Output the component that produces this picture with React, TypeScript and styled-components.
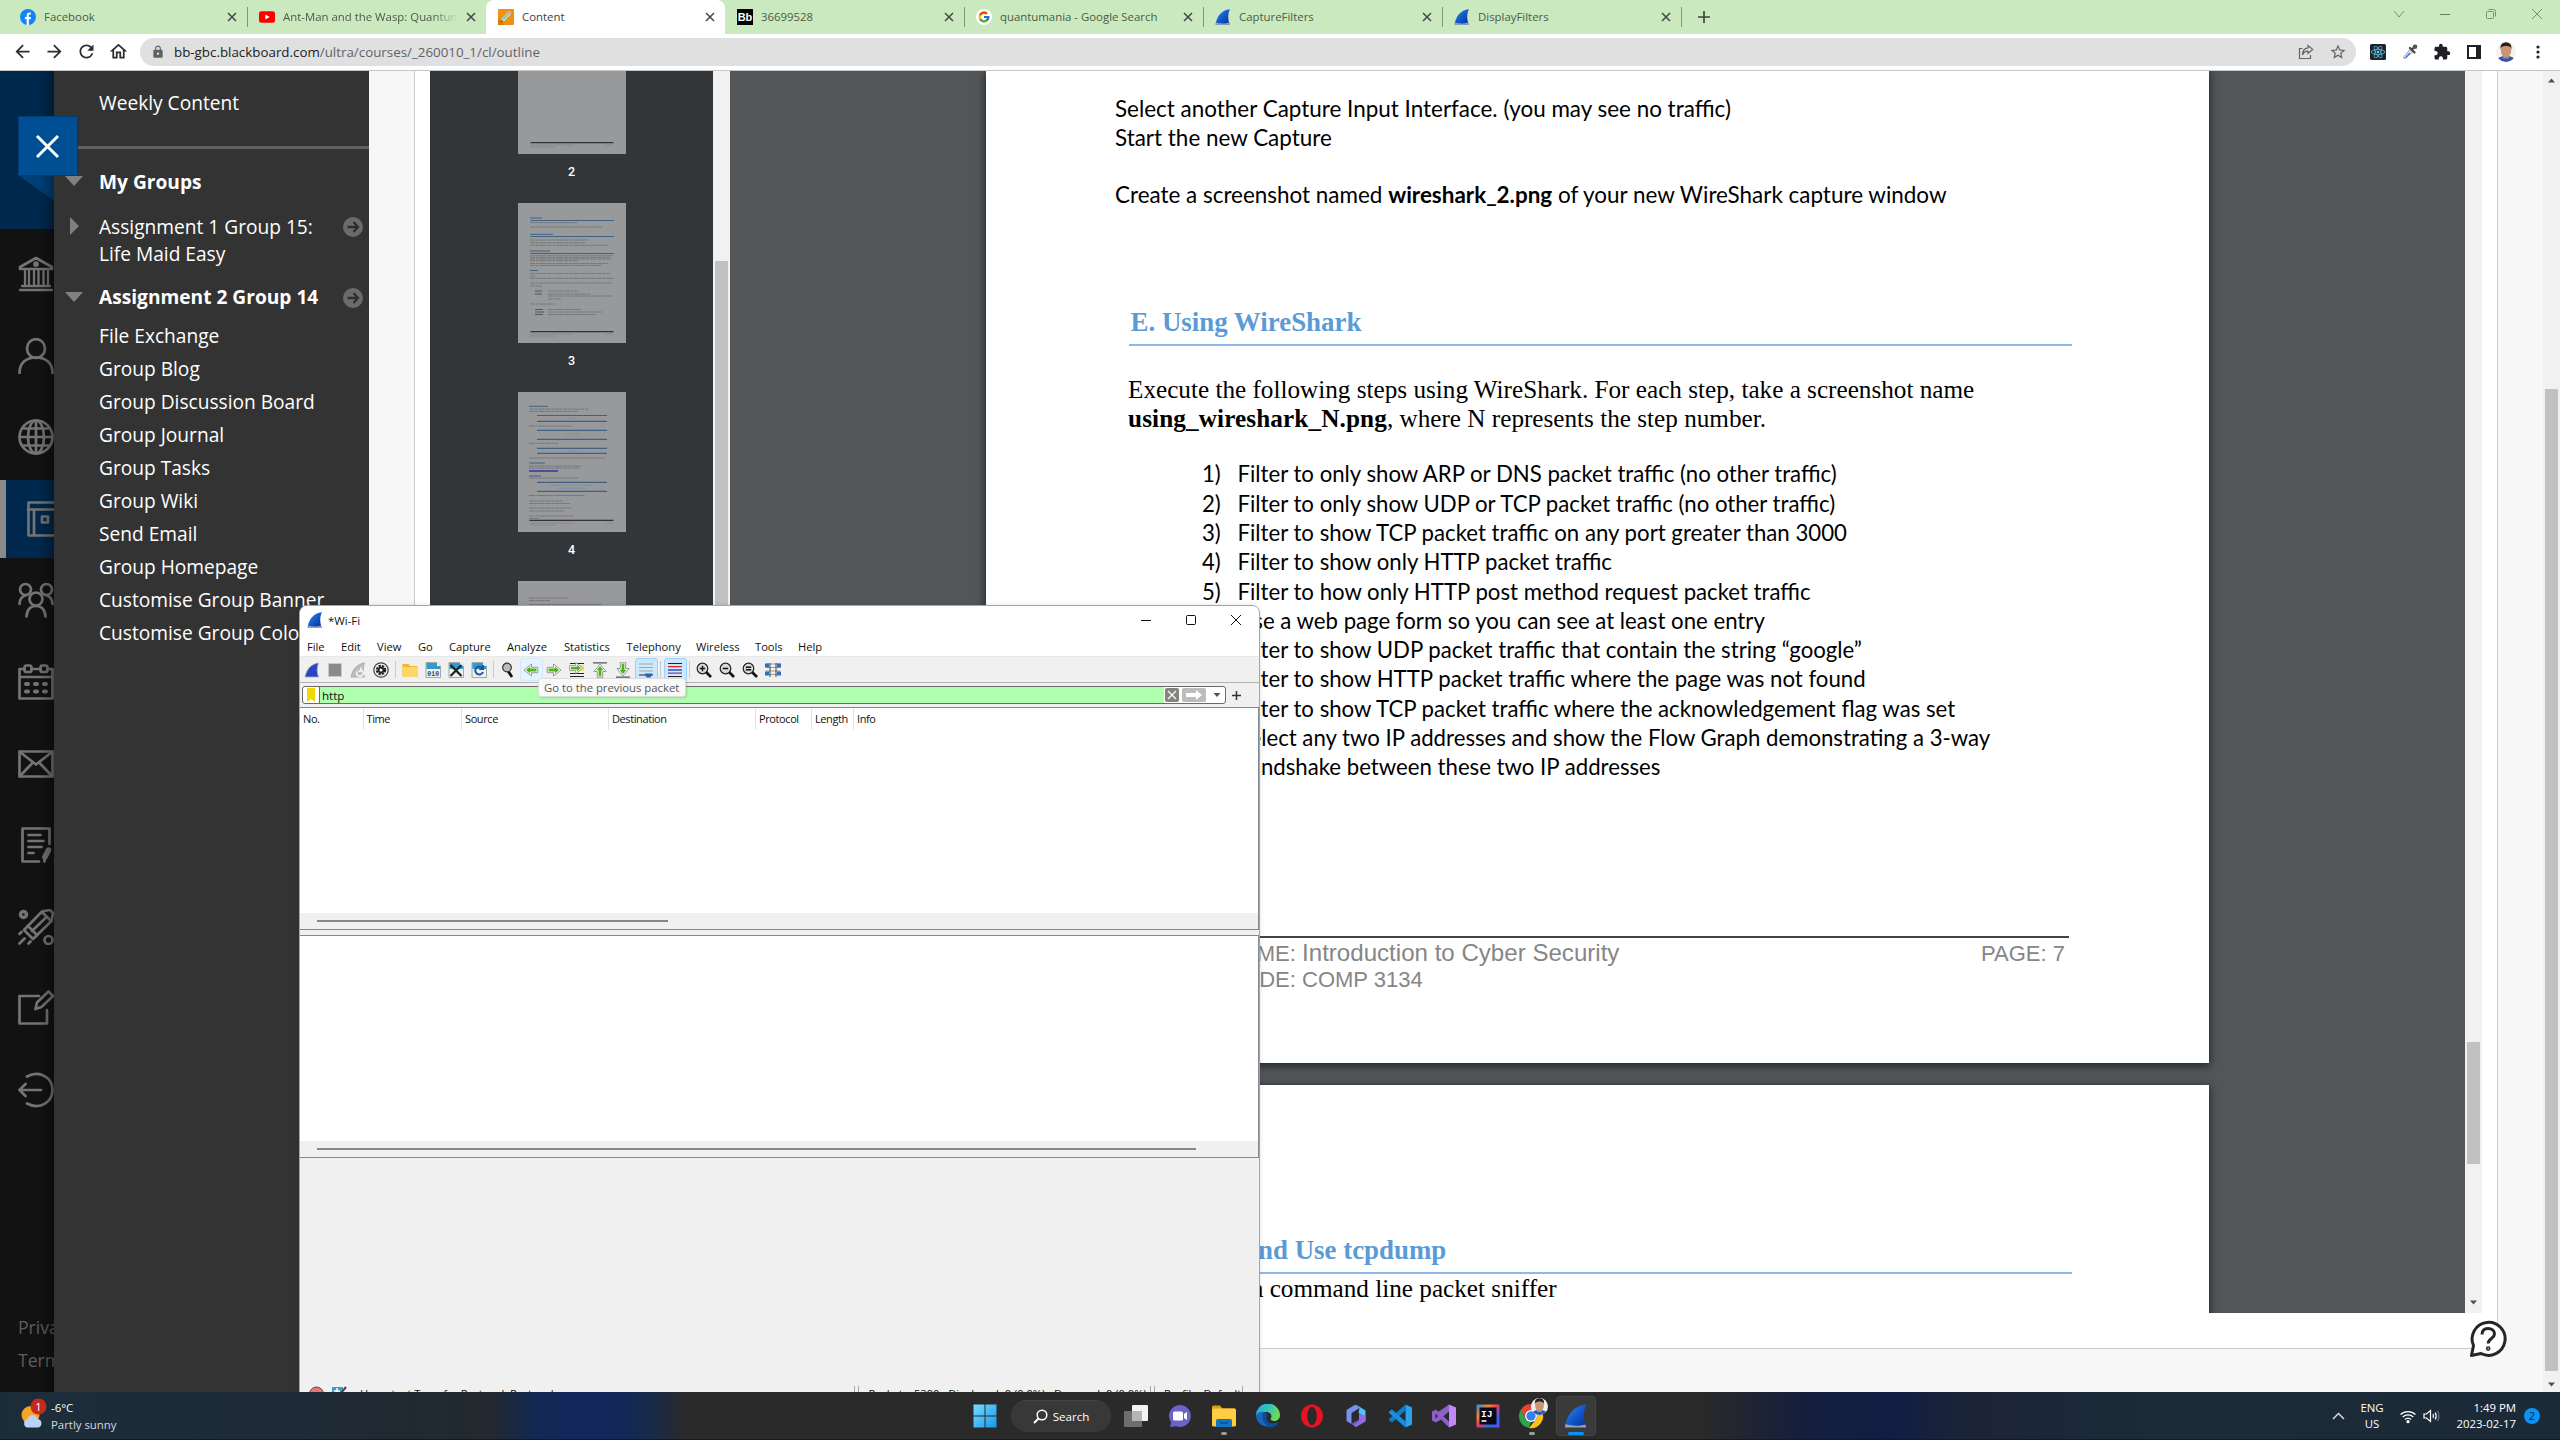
import React from 'react';
import styled, { createGlobalStyle, css } from 'styled-components';
import { MdArrowBack, MdArrowForward, MdRefresh, MdOutlineHome, MdLock, MdStarBorder, MdExtension } from 'react-icons/md';
import { FcGoogle } from 'react-icons/fc';
import { FaReact } from 'react-icons/fa';

const UI = '"Open Sans", "Noto Sans", sans-serif';
const DOC_SANS = 'Lato, "Open Sans", sans-serif';
const DOC_SERIF = '"Liberation Serif", serif';
const ARIAL = '"Liberation Sans", Arial, sans-serif';

const GlobalStyle = createGlobalStyle`
  * { box-sizing: border-box; }
  body { margin: 0; overflow: hidden; font-family: ${UI}; }
  svg { display: block; flex: none; }
`;

const Desktop = styled.div`
  width: 2560px; height: 1440px; overflow: hidden; display: flex; flex-direction: column;
`;
const Workspace = styled.div`
  position: relative; height: 1392px; overflow: hidden; display: flex; flex-direction: column; background: #fff;
`;

/* ---------- Browser chrome ---------- */
const TabStrip = styled.div`
  height: 34px; background: #cbe9bf; display: flex; padding-left: 8px; flex: none;
`;
const Tab = styled.div<{ $active?: boolean; $line?: boolean }>`
  width: 239px; height: 34px; display: flex; align-items: center; padding: 0 0 0 12px; position: relative;
  font-size: 11.4px; color: ${p => (p.$active ? '#3c4043' : '#4c5a49')};
  ${p => p.$active && css`background: #fff; border-radius: 8px 8px 0 0; `}
  ${p => p.$line && css`&::after { content: ''; position: absolute; right: -1px; top: 7px; width: 1px; height: 20px; background: #82947c; }`}
`;
const TabTitle = styled.div<{ $fade?: boolean }>`
  margin-left: 8px; width: 175px; overflow: hidden; white-space: nowrap; line-height: 20px;
  ${p => p.$fade && css`mask-image: linear-gradient(90deg, #000 150px, transparent 175px);`}
`;
const TabClose = styled.div`
  margin-left: 1px; width: 24px; display: flex; justify-content: center;
`;
const WindowButtons = styled.div`
  margin-left: auto; display: flex; height: 28px; align-items: center; svg { margin: 0 15px; }
`;
const NewTab = styled.div`
  width: 46px; display: flex; align-items: center; justify-content: center;
`;
const Toolbar = styled.div`
  height: 37px; border-bottom: 1px solid #c6c6c6; display: flex; align-items: center; padding: 0 6px 1px 6px; flex: none;
  color: #2b2d30;
`;
const NavButton = styled.div`
  width: 32px; flex: none; display: flex; justify-content: center;
`;
const Omnibox = styled.div`
  margin-left: 6px; width: 2216px; flex: none; height: 28px; border-radius: 14px; background: #e0e0e0; display: flex; align-items: center;
  padding: 0 9px 0 11px; font-size: 13.35px; color: #5f6368; margin-right: 6px; gap: 9px;
`;
const OmniActions = styled.div`
  display: flex; align-items: center; gap: 15px;
`;
const Url = styled.div`
  flex: 1; white-space: nowrap; b { font-weight: 400; color: #202124; }
`;

/* ---------- Page content ---------- */
const Content = styled.div`
  display: flex; height: 1321px; background: #f7f7f7;
`;
const Rail = styled.div`
  width: 54px; overflow: hidden; background: #121212; display: flex; flex-direction: column; position: relative; flex: none;
  &::after { content: ''; position: absolute; inset: 0; background: linear-gradient(90deg, transparent 38px, rgba(0,0,0,.3)); }
`;
const RailHead = styled.div`
  height: 158px; flex: none; background: #00284d; margin-bottom: 6px; display: flex; padding: 104px 0 0 18px;
`;
const RailItem = styled.div<{ $active?: boolean }>`
  height: 78px; margin-bottom: 3.6px; flex: none; display: flex; align-items: center; padding-left: 18px; color: #747474;
  ${p => p.$active && css`background: #00284d; border-left: 6px solid #8a8a8a; padding-left: 18px;`}
`;
const RailLinks = styled.div`
  margin-top: auto; padding: 0 0 15px 18px; font-size: 17.6px; line-height: 33px; color: #5e5e5e; white-space: nowrap;
`;
const CloseButton = styled.div`
  position: absolute; left: 18px; top: 116px; width: 60px; height: 60px; background: #004f94; border: 1px solid #003e75;
  display: flex; align-items: center; justify-content: center; padding-right: 1px;
`;
const Menu = styled.div`
  width: 315px; background: #333; color: #fff; font-size: 19.15px; line-height: 33px; padding-top: 16px; white-space: nowrap; flex: none;
`;
const MenuLink = styled.div`
  padding-left: 45px;
`;
const MenuRule = styled.div`
  height: 3px; background: #5f5f5f; margin: 26px 0 17px;
`;
const MenuGroup = styled.div<{ $bold?: boolean; $gap?: number; $tight?: boolean }>`
  display: grid; grid-template-columns: 45px 1fr 26px; align-items: start; margin-bottom: ${p => p.$gap || 0}px;
  font-weight: ${p => (p.$bold ? 700 : 400)}; line-height: ${p => (p.$tight ? 27 : 33)}px;
`;
const Twisty = styled.svg<{ $top: number }>`
  margin: ${p => p.$top}px 0 0 11px;
`;
const Go = styled.svg<{ $top: number }>`
  margin-top: ${p => p.$top}px;
`;
const Card = styled.div`
  margin-left: 45px; width: 2084px; height: 1278px; background: #fff; border: 1px solid #ccc; border-top: 0; padding: 0 15px; flex: none;
`;
const Gutter = styled.div`
  flex: 1;
`;
const Viewer = styled.div`
  height: 1242px; display: flex; overflow: hidden; background: #525659;
`;
const Thumbs = styled.div`
  width: 283px; background: #323639; display: flex; flex-direction: column; align-items: center; color: #fff;
  font: 500 12.5px/14px Roboto, sans-serif; flex: none;
`;
const ThumbLabel = styled.div`
  height: 49px; padding-top: 11px; flex: none;
`;
const ThumbPage = styled.div<{ $cut?: boolean }>`
  width: 108px; height: ${p => (p.$cut ? 83 : 140)}px; background: #98999b; display: flex; flex: none; overflow: hidden;
  ${p => p.$cut && css`align-items: flex-end;`}
`;
const ScrollTrack = styled.div<{ $pad: number }>`
  width: 17px; background: #f1f1f1; padding: ${p => p.$pad}px 2px 0; position: relative; flex: none;
`;
const ScrollThumb = styled.div<{ $h: number }>`
  height: ${p => p.$h}px; background: #c1c1c1;
`;
const Caret = styled.svg<{ $top: number }>`
  position: absolute; left: 4px; top: ${p => p.$top}px;
`;
const Canvas = styled.div`
  width: 1735px; padding-left: 256px; flex: none; display: flex; flex-direction: column; gap: 22px;
`;
const Page = styled.div<{ $h: number; $top: number }>`
  width: 1223px; height: ${p => p.$h}px; padding: ${p => p.$top}px 137px 0 143px; background: #fff; flex: none; color: #000;
  box-shadow: 0 2px 8px 1px rgba(0,0,0,.55); white-space: nowrap; font-variant-ligatures: none;
`;
const Steps = styled.div`
  margin-left: -14px; font: 22.45px/28.8px ${DOC_SANS};
`;
const Heading = styled.div<{ $gap?: number }>`
  margin-top: ${p => p.$gap || 0}px;
  font: 700 26.9px/32px ${DOC_SERIF}; color: #5b9bd5; border-bottom: 2px solid #8fb9e2; padding: 0 0 6px 1.5px;
`;
const Para = styled.div<{ $gap?: number }>`
  margin: ${p => p.$gap || 0}px 0 0 -1px;
  font: 25.2px/28.5px ${DOC_SERIF}; b { letter-spacing: .12px; }
`;
const List = styled.div`
  margin-top: 26px; font: 22.2px/29.33px ${DOC_SANS};
`;
const Item = styled.div`
  display: grid; grid-template-columns: 35.5px 1fr; padding-left: 73px; column-gap: 0;
`;
const Footer = styled.div`
  margin: 154.5px 3px 0 -3px; border-top: 2px solid #444; display: flex; justify-content: space-between; color: #868686;
  font: 22px/26px ${ARIAL}; padding: 3px 4px 0 0; big { font-size: 24.1px; line-height: 20px; }
`;
const Help = styled.div`
  position: absolute; left: 2469px; top: 1320px;
`;

/* ---------- Wireshark window ---------- */
const Win = styled.div`
  position: absolute; left: 299px; top: 605px; width: 961px; height: 800px; border: 1px solid #a3a5a8; border-radius: 8px 8px 0 0;
  background: #f0f0f0; overflow: hidden; box-shadow: 0 0 5px rgba(0,0,0,.12); color: #111; font-size: 11.15px; display: flex; flex-direction: column;
`;
const TitleBar = styled.div`
  height: 32px; background: #fff; display: flex; align-items: center; padding: 0 17px 4px 7px; gap: 5px; flex: none; font-size: 11.4px;
`;
const Controls = styled.div`
  margin-left: auto; display: flex; gap: 33px;
`;
const MenuBar = styled.div`
  height: 19px; background: #fff; border-bottom: 1px solid #e8e8e8; display: grid; line-height: 17px; padding-left: 7px; flex: none;
  grid-template-columns: 34px 36px 41px 31px 58px 57px 62.5px 69.5px 59px 43px 40px;
`;
const Tools = styled.div`
  height: 26px; border-bottom: 1px solid #b4b4b4; display: flex; align-items: center; padding-left: .5px; flex: none;
`;
const Tool = styled.div<{ $on?: boolean; $hover?: boolean }>`
  width: 23px; height: 23px; display: flex; align-items: center; justify-content: center; border-radius: 3px; border: 1px solid transparent;
  ${p => p.$on && css`background: #cce8ff; border-color: #99d1ff;`}
  ${p => p.$hover && css`background: #e5f3ff; border-color: #cfe8fc;`}
`;
const ToolSep = styled.div`
  width: 6px; height: 17px; display: flex; justify-content: center; &::after { content: ''; width: 1px; background: #c9c9c9; }
`;
const FilterRow = styled.div`
  height: 24px; display: flex; align-items: center; padding: 0 18px 0 2px; flex: none; gap: 6px;
`;
const FilterBox = styled.div`
  width: 924px; height: 18px; border: 1px solid #6a6a6a; border-radius: 3px; background: #fff; display: flex; align-items: center;
`;
const Bookmark = styled.div`
  width: 17px; height: 16px; border-right: 1px solid #6a6a6a; display: flex; justify-content: center; align-items: center;
`;
const FilterInput = styled.div`
  width: 847px; height: 16px; background: #afffaf; padding-left: 2px; line-height: 17px; font-size: 11.6px; margin-right: 1px;
`;
const Pill = styled.div<{ $w: number; $c: string }>`
  width: ${p => p.$w}px; height: 14px; border-radius: 2px; background: ${p => p.$c}; display: flex; align-items: center; justify-content: center; margin-right: 3px;
`;
const Frame = styled.div`
  width: 960px; margin-left: -1px; height: 223px; border: 1px solid #828790; background: #fff; display: flex; flex-direction: column; margin-bottom: 5px; flex: none;
`;
const Columns = styled.div`
  display: grid; grid-template-columns: 63.5px 98.5px 147px 147px 56px 42px 1fr; height: 21px; line-height: 22px; letter-spacing: -.4px; font-size: 11px;
  span { border-right: 1px solid #e2e2e2; padding-left: 3px; } span:last-child { border: 0; }
`;
const HScroll = styled.div<{ $w: number }>`
  height: 16px; margin-top: auto; background: #f0f0f0; display: flex; align-items: center; padding-left: 17px;
  &::after { content: ''; width: ${p => p.$w}px; height: 2px; background: #868686; }
`;
const StatusBar = styled.div`
  margin-top: 222px; height: 24px; display: flex; align-items: flex-start; line-height: 16px; padding: 1px 0 0 9px; white-space: nowrap; flex: none;
`;
const Divider = styled.div<{ $single?: boolean }>`
  width: 5px; height: 18px; border: solid #a8a8a8; border-width: ${p => (p.$single ? '0 0 0 1px' : '0 1px')}; flex: none;
`;
const StatusCell = styled.div<{ $w: number; $pad: number }>`
  width: ${p => p.$w}px; padding-left: ${p => p.$pad}px; flex: none;
`;
const Tooltip = styled.div`
  position: absolute; left: 538px; top: 678px; width: 148px; height: 19px; background: #f9f9f9; border: 1px solid #dcdcdc; border-radius: 3px;
  color: #575757; font-size: 11.3px; line-height: 17px; padding-left: 5px; white-space: nowrap; box-shadow: 1px 1px 2px rgba(0,0,0,.15);
`;

/* ---------- Taskbar ---------- */
const TaskbarRow = styled.div`
  height: 48px; display: flex; align-items: center; color: #fff; font-size: 11.4px; flex: none; border-bottom: 1px solid #1b1524;
  background: linear-gradient(90deg, #1c2d3a 0, #1e2a36 300px, #22292f 490px, #14284f 530px, #13275a 560px, #13275a 620px, #172a4a 650px, #2a2a2a 685px,
    #2a2a2a 1700px, #151e3c 1800px, #111d44 1890px, #1b2436 1965px, #1c2b38 2150px, #1c2a37 2560px);
`;
const Weather = styled.div`
  width: 963px; padding-left: 20px; display: flex; gap: 6px; line-height: 17px; align-items: center; color: #d5d9dc; div b { display: block; font-weight: 400; color: #fff; }
`;
const TaskIcon = styled.div<{ $active?: boolean; $dot?: boolean }>`
  width: 44px; height: 48px; display: flex; align-items: center; justify-content: center; position: relative; z-index: 0;
  ${p => p.$active && css`&::before { content: ''; position: absolute; z-index: -1; inset: 4px 2px; background: #3a3a3a; border: 1px solid #444; border-radius: 4px; }`}
  ${p => (p.$active || p.$dot) && css`&::after { content: ''; position: absolute; bottom: 5px; height: 3px; border-radius: 2px;
    width: ${p.$active ? 16 : 6}px; background: ${p.$active ? '#0a93f5' : '#9a9a9a'}; }`}
`;
const SearchPill = styled.div`
  width: 100px; height: 32px; border-radius: 16px; margin: 0 3px 0 4px; background: #383838; border-top: 1px solid #444;
  display: flex; align-items: center; justify-content: center; gap: 5px; font-size: 11.6px;
`;
const Tray = styled.div`
  margin-left: auto; display: flex; align-items: center; line-height: 16px; padding-right: 20px; white-space: nowrap;
`;
const Stack = styled.div<{ $align: string; $w: number }>`
  width: ${p => p.$w}px; text-align: ${p => p.$align};
`;
const Badge = styled.div`
  width: 16px; height: 16px; border-radius: 50%; background: #0a93f5; color: #06233c; display: flex; align-items: center; justify-content: center; font-size: 11px; margin-left: 8px;
`;
const Spaced = styled.div`
  margin-left: 6px;
`;

/* ---------- Icons ---------- */
const Fin = ({ s = 16 }: { s?: number }) => (
  <svg width={s} height={s} viewBox="0 0 16 16">
    <defs><linearGradient id="fin" x1="0" y1="0" x2="1" y2="1"><stop offset="0" stopColor="#3a8bf0" /><stop offset=".55" stopColor="#0f55c8" /><stop offset="1" stopColor="#07308c" /></linearGradient></defs>
    <path d="M.5 15.6C2 7 6.500 1 15 .3c-2.400 4.500-2.200 10.300-.2 15.300z" fill="url(#fin)" />
    <path d="M.5 15.600l.6-2.200c4 1.300 9 1.500 13.100.2l.6 2z" fill="#8fa3bb" />
  </svg>
);
const X = ({ s = 8, c = '#444', w = 1.5 }: { s?: number; c?: string; w?: number }) => (
  <svg width={s} height={s} viewBox="0 0 10 10" overflow="visible"><path d="M0 0L10 10M10 0L0 10" stroke={c} strokeWidth={(w * 10) / s} /></svg>
);
const FacebookIcon = () => (
  <svg width="16" height="16" viewBox="0 0 16 16"><circle cx="8" cy="8" r="8" fill="#1284f7" /><path d="M6.700 16V10.300H4.900V8h1.800V6.500c0-2 1-3 2.800-3 .6 0 1.100.1 1.400.1v2H9.900c-.9 0-1.100.5-1.100 1.100V8H11l-.4 2.300H8.800V16z" fill="#fff" /></svg>
);
const YoutubeIcon = () => (
  <svg width="16" height="16" viewBox="0 0 16 16"><rect y="2.300" width="16" height="11.500" rx="2.500" fill="#f00" /><path d="M6.300 5.500v5l4.400-2.500z" fill="#fff" /></svg>
);
const PencilIcon = () => (
  <svg width="16" height="16" viewBox="0 0 16 16"><rect width="16" height="16" rx="1" fill="#f29111" /><path d="M0 16V9l7 7z" fill="#d97a06" /><path d="M3 13l1-3.500 6-6.500 2.500 2.500-6 6.500z" fill="#b9e3c9" /><path d="M10 3l1.200-1.200 2.500 2.500L12.500 5.500z" fill="#e7a7c4" /><path d="M3 13l.5-1.900 1.600 1.500z" fill="#333" /><path d="M5 10.500l6-6.300" stroke="#4ba8a0" /></svg>
);
const BbIcon = () => (
  <svg width="16" height="16" viewBox="0 0 16 16"><rect width="16" height="16" fill="#000" /><text x="8" y="12" fontFamily="Liberation Sans" fontWeight="700" fontSize="11" fill="#fff" textAnchor="middle">Bb</text></svg>
);
const ShareIcon = () => (
  <svg width="16" height="16" viewBox="0 0 16 16" fill="none" stroke="#5f6368" strokeWidth="1.200"><path d="M4.500 4.500H1.500v10h11V11" /><path d="M10 1.500l4.700 4L10 9.500V7.200C7 7.200 5.500 8.500 4.500 11c0-4 2-6.800 5.500-7.200z" /></svg>
);

const stroke = { fill: 'none', stroke: 'currentColor', strokeWidth: 2.7, strokeLinecap: 'round' as const, strokeLinejoin: 'round' as const };
const RailSvg = ({ children }: { children: React.ReactNode }) => <svg width="36" height="36" viewBox="0 0 36 36" {...stroke}>{children}</svg>;
const railIcons: { active?: boolean; el: React.ReactNode }[] = [
  { el: <><path d="M2 11L18 2l16 9v2H2z" /><circle cx="18" cy="8" r="1.500" /><path d="M7 15v13M11 15v13M16 15v13M20.500 15v13M25.500 15v13M30 15v13M4 30h28M2 34h32" strokeWidth="2.300" /></> },
  { el: <><ellipse cx="18" cy="10.500" rx="9" ry="9.300" /><path d="M1.500 35C1.500 25 8 19.500 18 19.500S34.500 25 34.500 35" /></> },
  { el: <><circle cx="18" cy="18" r="16.500" /><ellipse cx="18" cy="18" rx="8" ry="16.500" /><path d="M18 2v32M2 18h32M4.500 9.500h27M4.500 26.500h27" /></> },
  { active: true, el: <><rect x="4.500" y="1.500" width="36" height="33" /><path d="M10 9v25M4 8.500h32" /><rect x="18" y="15.500" width="6" height="6" /><path d="M24 11H36" strokeWidth="0" /></> },
  { el: <><circle cx="7.500" cy="7.500" r="5.500" /><circle cx="28.500" cy="7.500" r="5.500" /><circle cx="18" cy="17" r="6.500" /><path d="M1.500 22c0-5 3-8 7-9M34.500 22c0-5-3-8-7-9M8.500 34.500C9 28 12 24 18 24s9 4 9.500 10.500" /></> },
  { el: <><path d="M6.500 5H1.500V34.500H34.500V5H29.500M13.500 5H22.500M1.500 13h33" /><rect x="6.500" y="1.500" width="7" height="6.500" rx="2" /><rect x="22.500" y="1.500" width="7" height="6.500" rx="2" /><path d="M8 20h2M17 20h2M26 20h2M8 27.500h2M17 27.500h2M26 27.500h2" strokeWidth="4" /></> },
  { el: <><rect x="1.500" y="5.500" width="33" height="25" /><path d="M2 6l16 12.500L34 6M2 30l11.500-12M34 30L22.500 18" /></> },
  { el: <><path d="M31.500 17V1.500H4.500V34.500H21M10.500 8h12M10.500 14h15M10.500 20h13M10.500 26h5" /><path d="M27 30l3.500-7" strokeWidth="5.500" /><path d="M26.500 34.500v-3" /></> },
  { el: <><path d="M6 21L24 2.500l8-1.500 3 3-1.500 8L15 30z" /><path d="M10 17l9 9M14 22L28 8.500M24 3l9 9" /><circle cx="5.500" cy="5.500" r="3" strokeWidth="3.500" /><circle cx="30.500" cy="31" r="4" /><path d="M1.500 25l2-2M1.500 34.500l5-5M10.500 34.500l2-2" /></> },
  { el: <><path d="M21 6H1.500V33.500H29V20" /><path d="M17.500 19l1.500-6.500L30.500 1.500l4.500 4.500L23.500 17z" /></> },
  { el: <><path d="M9 4.500C22-2.500 34.500 6 34.500 18S22 38.500 9 31.500M1.500 18H23M7.500 12L1.500 18l6 6" /></> },
];

/* ---------- Thumbnails ---------- */
type Bar = [number, number, number, string?, number?];
const BL = '#3f6186', FB = '#7f91a5', TX = '#777879';
const p2: Bar[] = [[56.5, 20, 56], [128.7, 12.5, 95.5, '#333', 1.3], [131, 12, 56, '#88898a'], [131, 88, 95, '#88898a'], [133, 12, 38, '#88898a']];
const p3: Bar[] = [[15, 12, 24, BL], [17.5, 12.5, 96, BL, 1.2], [19.6, 12, 59], [24, 12, 84], [31.3, 12, 35, BL], [33.5, 12.5, 96, BL, 1.2], [37, 12, 70], [39.7, 12, 68], [42.3, 12, 90],
  [48, 12, 32, BL], [50.5, 12.5, 96, BL, 1.2], [52.7, 12, 95], [54.4, 12, 92], [56, 12, 94], [57.7, 12, 60], [60.5, 12, 90], [62.4, 12, 84], [67.5, 12, 20, BL], [70.5, 12, 92], [73, 12, 18], [75.3, 12, 96],
  [80, 12, 94], [83, 12, 24], [88, 17, 24, '#555'], [88, 30, 60], [91, 17, 24, '#555'], [91, 30, 72], [93, 30, 95], [96, 30, 43], [101, 12, 38], [106.5, 17, 25, '#555'], [106.5, 30, 63], [109, 17, 26, '#555'], [109, 30, 84], [111.5, 17, 25, '#555'], [111.5, 30, 78],
  [128.7, 12.5, 95.5, '#333', 1.3], [131, 12, 56, '#88898a'], [131, 88, 95, '#88898a'], [133, 12, 38, '#88898a']];
const p4: Bar[] = [[14.3, 11, 30, BL], [17, 11, 71], [19.3, 11, 60], [23.5, 19, 89, BL, 1.2], [26.3, 49, 60, FB], [29.3, 19, 89, BL, 1.2], [34, 11, 55], [38.3, 19, 89, BL, 1.2], [41.5, 48, 62, FB], [44, 45, 64, FB],
  [47.3, 19, 89, BL, 1.2], [51.3, 11, 40], [56.3, 19, 89, BL, 1.2], [59, 49, 60, FB], [61.3, 19, 89, BL, 1.2], [66, 11, 87], [71, 11, 27, BL], [74, 11, 64], [76, 11, 62], [79, 11, 40, '#2424a0', 1.3], [84, 11, 23, BL], [86, 11, 60],
  [90.3, 19, 89, BL, 1.2], [93.3, 31, 76, FB], [96.3, 38, 70, FB], [99.3, 19, 89, BL, 1.2], [103.5, 11, 67], [109, 11, 45], [111.5, 11, 52], [116, 11, 54], [119, 11, 46], [124, 11, 56], [126.5, 11, 21],
  [128.4, 11.5, 95.5, '#333', 1.3], [131, 12, 56, '#88898a'], [131, 88, 95, '#88898a'], [133, 12, 38, '#88898a']];
const p5: Bar[] = [[17, 11, 50], [19.5, 11, 32], [23.5, 11, 84]];
const ThumbArt = ({ bars }: { bars: Bar[] }) => (
  <svg width="108" height="140" viewBox="0 0 108 140">
    {bars.map(([y, a, b, c = TX, w = 1], i) => <path key={i} d={`M${a} ${y}H${b}`} stroke={c} strokeWidth={w} strokeDasharray={c === TX ? '5 .6 3 .6 7 .6' : undefined} />)}
  </svg>
);

/* ---------- Wireshark tool glyphs ---------- */
const T = ({ children }: { children: React.ReactNode }) => <svg width="16" height="16" viewBox="0 0 16 16">{children}</svg>;
const file = <><path d="M1 .5h11l3.500 3.500v11.500H1z" fill="#eef2ea" stroke="#8f9a8c" strokeWidth=".8" /><path d="M1.400 .9h10.400l3.300 3.300V7H1.400z" fill="#2e9bd6" /><path d="M12 .5v3.500h3.500z" fill="#fff" /></>;
const GreenArrow = ({ r = 0 }: { r?: number }) => (
  <g transform={`rotate(${r} 8 8)`}>
    <path d="M1.200 5.300h6.300V2L15 8l-7.500 6v-3.300H1.200z" fill="#fff" stroke="#8a8f88" strokeWidth=".9" />
    <path d="M2.500 6.600h6.300V4.500L13 8l-4.200 3.500V9.400H2.500z" fill="#4fb51a" />
  </g>
);
const Mag = ({ sign }: { sign: string }) => <T><path d="M9.500 9.500L15 15" stroke="#111" strokeWidth="2.600" /><circle cx="6.500" cy="6.500" r="5.300" fill="#d9d9d9" stroke="#222" strokeWidth="1.200" /><path d={sign} stroke="#111" strokeWidth="1.400" fill="none" /></T>;
const toolGroups: { el: React.ReactNode; on?: boolean; hover?: boolean }[][] = [
  [
    { el: <T><path d="M1 15C2.500 8 6.500 2 14.500 1c-1.800 4.500-1.800 9.500 0 14z" fill="#2745c4" stroke="#aab" strokeWidth=".8" /></T> },
    { el: <T><rect x="1.500" y="1.500" width="13" height="13" fill="#8a8a8a" stroke="#c9c9c9" /></T> },
    { el: <T><path d="M1 15C2.500 8 6.500 2 14.500 1c-1.800 4.500-1.800 9.500 0 14z" fill="#bdbdbd" stroke="#a5a5a5" strokeWidth=".8" /><path d="M11 8a3.300 3.300 0 1 1-4 1.500M11 5.500V9H8" fill="none" stroke="#f7f7f7" strokeWidth="1.600" /></T> },
    { el: <T><circle cx="8" cy="8" r="7.200" fill="#eee" stroke="#444" strokeWidth="1.200" /><circle cx="8" cy="8" r="4" fill="none" stroke="#222" strokeWidth="2.400" strokeDasharray="2.200 1" /><circle cx="8" cy="8" r="3.200" fill="#222" /><circle cx="8" cy="8" r="1.500" fill="#fff" /></T> },
  ],
  [
    { el: <T><path d="M.5 2h6l1.500 2h7.500v10.500H.5z" fill="#f3b52c" /><path d="M.5 5h15v9.500H.5z" fill="#ffd766" /></T> },
    { el: <T>{file}<text x="8.200" y="13.500" fontSize="6.500" fontWeight="700" textAnchor="middle" fontFamily="Liberation Mono" fill="#444">010</text></T> },
    { el: <T>{file}<path d="M2.500 3l11 11M13.500 3l-11 11" stroke="#222" strokeWidth="2.200" /></T> },
    { el: <T>{file}<path d="M11.500 6.200A4 4 0 1 0 12 10M12.200 3v4h-4" fill="none" stroke="#1d56a5" strokeWidth="2" /></T> },
  ],
  [
    { el: <T><path d="M8 9l4 6" stroke="#111" strokeWidth="2.800" /><circle cx="7" cy="5.500" r="4.300" fill="#bbb" stroke="#333" strokeWidth="1.200" /></T> },
    { hover: true, el: <T><GreenArrow r={180} /></T> },
    { el: <T><GreenArrow /></T> },
    { el: <T><path d="M1 1.500h14M1 11.500h14M1 14.500h14" stroke="#222" strokeWidth="1.200" /><rect x="9" y="3" width="6" height="6" fill="#ffe14a" /><g transform="translate(-.5 -1.500) scale(.95)"><GreenArrow /></g></T> },
    { el: <T><path d="M1 .8h14" stroke="#555" strokeWidth="1.200" /><g transform="translate(0 1)"><GreenArrow r={-90} /></g></T> },
    { el: <T><path d="M1 15.200h14" stroke="#555" strokeWidth="1.200" /><g transform="translate(0 -1)"><GreenArrow r={90} /></g></T> },
    { on: true, el: <T><path d="M1 2h14M1 5.500h14M1 9h14" stroke="#a3a89f" strokeWidth="1.200" /><path d="M1 13h14" stroke="#222" strokeWidth="1.200" /><path d="M6.500 11.500h8l-2 4h-4z" fill="#2d62b3" /></T> },
  ],
  [{ on: true, el: <T><path d="M1 1.500h14" stroke="#222" strokeWidth="1.200" /><path d="M1 4.700h14" stroke="#e02020" strokeWidth="1.300" /><path d="M1 8h14" stroke="#2d4fc4" strokeWidth="1.300" /><path d="M1 11.200h14" stroke="#7b3ca0" strokeWidth="1.200" /><path d="M1 14.500h14" stroke="#222" strokeWidth="1.200" /></T> }],
  [
    { el: <Mag sign="M6.500 3.800v5.400M3.800 6.500h5.400" /> },
    { el: <Mag sign="M3.800 6.500h5.400" /> },
    { el: <Mag sign="M3.800 5.300h5.400M3.800 7.800h5.400" /> },
    { el: <T><path d="M1 2h14M1 5.500h14M1 9h14M1 12.500h14" stroke="#9a9f97" /><path d="M5 1v14M11 1v14" stroke="#444" /><path d="M0 1.500h4v4H0zM12 1.500h4v4h-4zM0 9.500h4v4H0zM12 9.500h4v4h-4z" fill="#2d6fc0" /></T> },
  ],
];

/* ---------- Taskbar art ---------- */
const B = ({ children }: { children: React.ReactNode }) => <svg width="24" height="24" viewBox="0 0 24 24">{children}</svg>;
const Portrait = ({ s }: { s: number }) => (
  <svg width={s} height={s} viewBox="0 0 20 20"><defs><clipPath id="pc"><circle cx="10" cy="10" r="10" /></clipPath></defs>
    <g clipPath="url(#pc)"><rect width="20" height="20" fill="#f4f1ef" /><path d="M1 20c0-4.500 4-6 9-6s9 1.500 9 6z" fill="#2d57b8" /><rect x="7" y="11" width="6" height="5.500" fill="#b57f5f" /><ellipse cx="10" cy="8.800" rx="5.200" ry="6.800" fill="#c99573" /><path d="M4.600 7.500C4 2.500 6.500.3 10 .3s6 2.200 5.400 7.200c-.6-2.500-1.500-3.500-5.400-3.500s-4.800 1-5.400 3.500z" fill="#2a211d" /></g></svg>
);
const ChromeIcon = () => (
  <svg width="28" height="28" viewBox="0 0 28 28" overflow="visible">
    <path d="M2.600 8A12 12 0 0 1 13 2a12 12 0 0 1 10.400 6H13a6 6 0 0 0-5.200 9z" fill="#ea4335" />
    <path d="M2.600 8l5.200 9A6 6 0 0 0 13 20l-2 5.900A12 12 0 0 1 2.600 8z" fill="#2da44e" /><path d="M23.400 8A12 12 0 0 1 11 25.900L18.200 17A6 6 0 0 0 17 9.500V8z" fill="#fbc116" />
    <circle cx="13" cy="14" r="6" fill="#fff" /><circle cx="13" cy="14" r="4.700" fill="#3b7ded" />
    <g transform="translate(13 -4)"><Portrait s={17} /></g>
  </svg>
);
const taskIcons: { el: React.ReactNode; dot?: boolean; active?: boolean }[] = [
  { el: <B><rect x="8" y="1" width="16" height="16" rx="1" fill="#f2f2f2" /><rect y="7" width="18" height="16" rx="1" fill="#777" opacity=".88" /><rect x="8" y="7" width="10" height="10" fill="#b5b5b5" /></B> },
  { el: <B><path d="M12 1a11 11 0 1 1-4 21.300L2 23l1.200-4.500A11 11 0 0 1 12 1z" fill="#6a63c8" /><rect x="5" y="7.500" width="10" height="9" rx="1.500" fill="#fff" /><path d="M16 10l3-2v8l-3-2z" fill="#fff" /></B> },
  { dot: true, el: <B><path d="M0 3q0-1.500 1.500-1.500H8l2.500 3H22q1.500 0 1.500 1.500v6H0z" fill="#e09c10" /><rect y="4.500" width="24" height="18" rx="1.500" fill="#ffcc42" /><path d="M4 23v-6q0-2 2-2h12q2 0 2 2v6z" fill="#1274c5" /><path d="M8 19h8" stroke="#0b4f8d" strokeWidth="1.500" /></B> },
  { el: <B><defs><linearGradient id="eg" x1="0" y1="0" x2="1" y2=".3"><stop offset="0" stopColor="#2aa7e0" /><stop offset=".6" stopColor="#35c5b5" /><stop offset="1" stopColor="#6edb55" /></linearGradient></defs>
    <path d="M0 12A12 12 0 0 1 24 11c0 4-3 6-6 6s-4-1.500-3-3c1.500-3-1-6-5-6S1 10 0 12z" fill="url(#eg)" /><path d="M0 12c1-3 4-5 8.500-4C6 10 6 16 10 19c3 2.300 8 2 11-.5A12 12 0 0 1 0 12z" fill="#1769c0" /><path d="M8.500 8C5 11 5.500 21 15 23.500 21 23 22.500 18 21.500 18c-5 3-10 1-11-3-.5-2.500 0-4 1-5z" fill="#0d4d9c" /></B> },
  { el: <B><path fillRule="evenodd" d="M12 .5C18 .5 23 5.500 23 12s-5 11.500-11 11.500S1 18.500 1 12 6 .5 12 .5zM12 3C9 3 7.300 7.500 7.300 12S9 21 12 21s4.700-4.500 4.700-9S15 3 12 3z" fill="#e81224" /></B> },
  { el: <B>
    <path d="M11 .8L2.500 6v11l4 2.500 1-.5V9l8-5z" fill="#7b8ff0" /><path d="M11 .8l4.500 3.200-1 5L20 12.500l1.500 5V6.500L13.500 1.500z" fill="#4fc3f7" />
    <path d="M2.500 17l9.500 6 9.500-5.500v-5.500L15 10v5.500l-7.500 4z" fill="#6a4fd0" /><path d="M21.500 12v5.500L12 23l-3-2 6-3.500V10z" fill="#b07af5" opacity=".6" /></B> },
  { el: <B><path d="M17.500.5L24 3.500v17l-6.500 3z" fill="#2aa3ee" /><path d="M17.500.5v6L4 18.500l-3-2 0-1.500z" fill="#0d7cc9" /><path d="M17.500 23.500v-6L4 5.500 1 7.500V9z" fill="#1a8fdc" /></B> },
  { el: <B><path d="M17 .5L24 3.500v17l-7 3z" fill="#c08af5" /><path d="M17 .5v7L4 18.500 0 16.500V7.500l4-2L17 17.500v6L9 15.500l-5 3V9.500z" fill="#8e5fc7" /><path d="M3.500 9.500v5.500L6 12z" fill="#2a2a2a" /></B> },
  { el: <B><defs><linearGradient id="ij" x1="0" y1="0" x2="1" y2="1"><stop offset="0" stopColor="#1b8ff2" /><stop offset=".3" stopColor="#f9822a" /><stop offset=".5" stopColor="#e8336d" /><stop offset=".75" stopColor="#1b6ff2" /><stop offset="1" stopColor="#7a3ff0" /></linearGradient></defs><rect x=".5" y=".5" width="23" height="23" fill="url(#ij)" /><rect x="3.500" y="3.500" width="17" height="17" fill="#080818" /><text x="5" y="12.500" fontFamily="Liberation Mono" fontWeight="700" fontSize="9.500" fill="#fff">IJ</text><path d="M5.500 17h5" stroke="#fff" strokeWidth="1.500" /></B> },
  { dot: true, el: <ChromeIcon /> },
  { active: true, el: <Fin s={24} /> },
];

const tabs = [
  { t: 'Facebook', i: <FacebookIcon />, line: true },
  { t: 'Ant-Man and the Wasp: Quantumania', i: <YoutubeIcon />, fade: true },
  { t: 'Content', i: <PencilIcon />, active: true },
  { t: '36699528', i: <BbIcon />, line: true },
  { t: 'quantumania - Google Search', i: <svg width="16" height="16" viewBox="0 0 16 16"><circle cx="8" cy="8" r="8" fill="#fff" /><g transform="translate(1.500 1.500)"><FcGoogle size={13} /></g></svg>, line: true },
  { t: 'CaptureFilters', i: <Fin />, line: true },
  { t: 'DisplayFilters', i: <Fin />, line: true },
];
const groupLinks = ['File Exchange', 'Group Blog', 'Group Discussion Board', 'Group Journal', 'Group Tasks', 'Group Wiki', 'Send Email', 'Group Homepage', 'Customise Group Banner', 'Customise Group Colour'];
const steps: [string, string][] = [
  ['1)', 'Filter to only show ARP or DNS packet traffic (no other traffic)'],
  ['2)', 'Filter to only show UDP or TCP packet traffic (no other traffic)'],
  ['3)', 'Filter to show TCP packet traffic on any port greater than 3000'],
  ['4)', 'Filter to show only HTTP packet traffic'],
  ['5)', 'Filter to how only HTTP post method request packet traffic'],
  ['', 'Use a web page form so you can see at least one entry'],
  ['6)', 'Filter to show UDP packet traffic that contain the string “google”'],
  ['7)', 'Filter to show HTTP packet traffic where the page was not found'],
  ['8)', 'Filter to show TCP packet traffic where the acknowledgement flag was set'],
  ['9)', 'Select any two IP addresses and show the Flow Graph demonstrating a 3-way'],
  ['', 'handshake between these two IP addresses'],
];

const GoArrow = ({ top }: { top: number }) => (
  <Go $top={top} width="20" height="20" viewBox="0 0 20 20"><circle cx="10" cy="10" r="10" fill="#6b6b6b" /><path d="M4.500 10h10M10.500 5l4.500 5-4.500 5" fill="none" stroke="#2e2e2e" strokeWidth="2.300" /></Go>
);
const Down = ({ top }: { top: number }) => <Twisty $top={top} width="18" height="10"><path d="M0 0h18L9 10z" fill="#808080" /></Twisty>;
const Scroll = ({ pad, h, up, down }: { pad: number; h: number; up?: number; down?: number }) => (
  <ScrollTrack $pad={pad}>
    {up !== undefined && <Caret $top={up} width="9" height="5"><path d="M1 4.500h7L4.500.5z" fill="#505050" /></Caret>}
    <ScrollThumb $h={h} />
    {down !== undefined && <Caret $top={down} width="9" height="5"><path d="M1 .5h7L4.500 4.500z" fill="#505050" /></Caret>}
  </ScrollTrack>
);

export default function App() {
  return (
    <Desktop>
      <GlobalStyle />
      <Workspace>
        <TabStrip>
          {tabs.map(t => (
            <Tab key={t.t} $active={t.active} $line={t.line}>
              {t.i}<TabTitle $fade={t.fade}>{t.t}</TabTitle><TabClose><X /></TabClose>
            </Tab>
          ))}
          <NewTab><svg width="12" height="12"><path d="M6 0v12M0 6h12" stroke="#3d463a" strokeWidth="1.700" /></svg></NewTab>
          <WindowButtons>
            <svg width="16" height="16" fill="none" stroke="#7d8f77"><path d="M3 5l5 6 5-6" /></svg>
            <svg width="16" height="16" fill="none" stroke="#6d7d67"><path d="M3 8.500h10" /></svg>
            <svg width="16" height="16" fill="none" stroke="#7d8f77"><rect x="3.500" y="5.500" width="7" height="7" rx="1" /><path d="M5.500 3.500h5q2 0 2 2v5" /></svg>
            <svg width="16" height="16" fill="none" stroke="#7d8f77"><path d="M3 3l10 10M13 3L3 13" /></svg>
          </WindowButtons>
        </TabStrip>
        <Toolbar>
          <NavButton><MdArrowBack size={21} /></NavButton>
          <NavButton><MdArrowForward size={21} /></NavButton>
          <NavButton><MdRefresh size={21} /></NavButton>
          <NavButton><MdOutlineHome size={21} /></NavButton>
          <Omnibox>
            <MdLock size={14} color="#5f6368" />
            <Url><b>bb-gbc.blackboard.com</b>/ultra/courses/_260010_1/cl/outline</Url>
            <OmniActions><ShareIcon /><MdStarBorder size={18} color="#5f6368" /></OmniActions>
          </Omnibox>
          <NavButton><svg width="16" height="16" viewBox="0 0 16 16"><rect width="16" height="16" rx="1.500" fill="#20232a" /><g transform="translate(1 1)"><FaReact size={14} color="#61dafb" /></g></svg></NavButton>
          <NavButton><svg width="16" height="16" viewBox="0 0 16 16"><path d="M2 14.500l-.5-1.500 7-8 2.500 2.500-7.500 7z" fill="#cfd8ee" stroke="#8090b0" strokeWidth=".7" /><path d="M3 13.500l4.500-4.700 1 1-4.500 4.200z" fill="#3d6be0" /><path d="M8 4l4.500 4.500M10 5.500L13.500 2" stroke="#444" strokeWidth="2.200" strokeLinecap="round" /><circle cx="13" cy="2.800" r="2.300" fill="#555" /></svg></NavButton>
          <NavButton><MdExtension size={18} color="#202124" /></NavButton>
          <NavButton><svg width="14" height="14"><rect x="1" y="1" width="12" height="12" fill="#fff" stroke="#202124" strokeWidth="2" /><rect x="9" y="1" width="4" height="12" fill="#202124" /></svg></NavButton>
          <NavButton><Portrait s={20} /></NavButton>
          <NavButton><svg width="4" height="14" fill="#202124"><circle cx="2" cy="2" r="1.600" /><circle cx="2" cy="7" r="1.600" /><circle cx="2" cy="12" r="1.600" /></svg></NavButton>
        </Toolbar>

        <Content>
          <Rail>
            <RailHead><svg width="36" height="26"><path d="M0 0h36v25.500z" fill="#003f78" /></svg></RailHead>
            {railIcons.map((r, i) => <RailItem key={i} $active={r.active}><RailSvg>{r.el}</RailSvg></RailItem>)}
            <RailLinks><div>Privacy</div><div>Terms</div></RailLinks>
          </Rail>
          <Menu>
            <MenuLink>Weekly Content</MenuLink>
            <MenuRule />
            <MenuGroup $bold $gap={15}><Down top={10} /><span>My Groups</span></MenuGroup>
            <MenuGroup $tight $gap={13}>
              <Twisty $top={3} width="16" height="18"><path d="M5 0v18l9-9z" fill="#808080" /></Twisty>
              <span>Assignment 1 Group 15:<br />Life Maid Easy</span><GoArrow top={3} />
            </MenuGroup>
            <MenuGroup $bold $gap={6}><Down top={11} /><span>Assignment 2 Group 14</span><GoArrow top={7} /></MenuGroup>
            {groupLinks.map(g => <MenuLink key={g}>{g}</MenuLink>)}
          </Menu>
          <Card>
            <Viewer>
              <Thumbs>
                <ThumbPage $cut><ThumbArt bars={p2} /></ThumbPage><ThumbLabel>2</ThumbLabel>
                <ThumbPage><ThumbArt bars={p3} /></ThumbPage><ThumbLabel>3</ThumbLabel>
                <ThumbPage><ThumbArt bars={p4} /></ThumbPage><ThumbLabel>4</ThumbLabel>
                <ThumbPage><ThumbArt bars={p5} /></ThumbPage>
              </Thumbs>
              <Scroll pad={190} h={700} />
              <Canvas>
                <Page $h={992} $top={24}>
                  <Steps>
                    <div>Select another Capture Input Interface. (you may see no traffic)</div>
                    <div>Start the new Capture</div>
                    <br />
                    <div>Create a screenshot named <b>wireshark_2.png</b> of your new WireShark capture window</div>
                  </Steps>
                  <Heading $gap={96}>E. Using WireShark</Heading>
                  <Para $gap={30}>
                    Execute the following steps using WireShark. For each step, take a screenshot name<br />
                    <b>using_wireshark_N.png</b>, where N represents the step number.
                  </Para>
                  <List>{steps.map(([n, s]) => <Item key={s}><span>{n}</span><span>{s}</span></Item>)}</List>
                  <Footer>
                    <div>COURSE NAME: <big>Introduction to Cyber Security</big><br />COURSE CODE: COMP 3134</div>
                    <div>PAGE: 7</div>
                  </Footer>
                </Page>
                <Page $h={400} $top={149}>
                  <Heading>F.{'\u00a0 '}Install and Use tcpdump</Heading>
                  <Para $gap={1}>Tcpdump is a command line packet sniffer</Para>
                </Page>
              </Canvas>
              <Scroll pad={971} h={122} down={1229} />
            </Viewer>
          </Card>
          <Gutter />
          <Scroll pad={318} h={982} up={7} down={1311} />
        </Content>

        <CloseButton><X s={21} c="#fff" w={3} /></CloseButton>
        <Help><svg width="38" height="38" viewBox="0 0 38 38" fill="none" stroke="#262626" strokeWidth="3"><path d="M4.500 25.500A16.500 16.500 0 1 1 12 33.500L2.500 35.500z" fill="#fff" strokeLinejoin="round" /><path d="M13 14.500C13 10.500 15.500 8.500 19 8.500s6.500 2 6.500 5.500c0 4.500-6.300 4.500-6.300 9.500" /><circle cx="19.200" cy="28.500" r=".8" /></svg></Help>

        <Win>
          <TitleBar><Fin /><span>*Wi-Fi</span>
            <Controls>
              <svg width="12" height="12"><path d="M1 6.500h10" stroke="#111" /></svg>
              <svg width="12" height="12"><rect x="1.500" y="1.500" width="9" height="9" rx="1" fill="none" stroke="#111" /></svg>
              <svg width="12" height="12"><path d="M1 1l10 10M11 1L1 11" stroke="#111" /></svg>
            </Controls>
          </TitleBar>
          <MenuBar>{['File', 'Edit', 'View', 'Go', 'Capture', 'Analyze', 'Statistics', 'Telephony', 'Wireless', 'Tools', 'Help'].map(m => <span key={m}>{m}</span>)}</MenuBar>
          <Tools>
            {toolGroups.map((g, i) => (
              <React.Fragment key={i}>
                {i > 0 && <ToolSep />}
                {g.map((t, j) => <Tool key={j} $on={t.on} $hover={t.hover}>{t.el}</Tool>)}
              </React.Fragment>
            ))}
          </Tools>
          <FilterRow>
            <FilterBox>
              <Bookmark><svg width="8" height="14"><path d="M0 0h8v14l-4-3-4 3z" fill="#f0d800" /></svg></Bookmark>
              <FilterInput>http</FilterInput>
              <Pill $w={14} $c="#82857f"><X s={8} c="#fff" w={1.2} /></Pill>
              <Pill $w={24} $c="#bcbcbc"><svg width="16" height="10"><path d="M0 3h10V0l6 5-6 5V7H0z" fill="#fff" /></svg></Pill>
              <svg width="16" height="6"><path d="M4.500 1h7L8 5z" fill="#555" /></svg>
            </FilterBox>
            <svg width="9" height="9"><path d="M4.500 0v9M0 4.500h9" stroke="#333" strokeWidth="1.500" /></svg>
          </FilterRow>
          <Frame>
            <Columns>{['No.', 'Time', 'Source', 'Destination', 'Protocol', 'Length', 'Info'].map(c => <span key={c}>{c}</span>)}</Columns>
            <HScroll $w={351} />
          </Frame>
          <Frame><HScroll $w={879} /></Frame>
          <StatusBar>
            <svg width="38" height="16"><circle cx="7.500" cy="8" r="7" fill="#e87474" stroke="#6a4444" /><rect x="23" y="1" width="11" height="14" fill="#3d9bd0" /><path d="M25 5h6M28 2v5" stroke="#fff" strokeWidth="1.500" /><path d="M28 12l9-11" stroke="#444" strokeWidth="2" /></svg>
            <StatusCell $w={507} $pad={13}>Hypertext Transfer Protocol: Protocol</StatusCell><Divider />
            <StatusCell $w={291} $pad={9.5}>Packets: 5390 · Displayed: 0 (0.0%) · Dropped: 0 (0.0%)</StatusCell><Divider />
            <StatusCell $w={87} $pad={9}>Profile: Default</StatusCell><Divider $single />
          </StatusBar>
        </Win>
        <Tooltip>Go to the previous packet</Tooltip>
      </Workspace>

      <TaskbarRow>
        <Weather>
          <svg width="25" height="34" viewBox="0 0 25 34" overflow="visible"><circle cx="10.500" cy="16" r="9" fill="#f5a524" /><path d="M7 28.500a4.500 4.500 0 0 1 .3-8.500 5.500 5.500 0 0 1 10.500 0 4.400 4.400 0 0 1 .7 8.500z" fill="#b9d2f8" /><circle cx="18.500" cy="7.500" r="8" fill="#c42b1c" /><text x="18.500" y="11.500" fontSize="11" fill="#fff" textAnchor="middle">1</text></svg>
          <div><b>-6°C</b>Partly sunny</div>
        </Weather>
        <TaskIcon><B><defs><linearGradient id="ws" x1="0" y1="0" x2="1" y2="1"><stop offset="0" stopColor="#7adcfb" /><stop offset="1" stopColor="#1596f0" /></linearGradient></defs><path d="M.5.5h11v11H.5zM12.500.5h11v11h-11zM.5 12.500h11v11H.5zM12.500 12.500h11v11h-11z" fill="url(#ws)" /></B></TaskIcon>
        <SearchPill><svg width="15" height="15" fill="none" stroke="#fff" strokeWidth="1.500"><circle cx="9" cy="6" r="4.800" /><path d="M5.600 9.500L1 14" strokeWidth="2" /></svg>Search</SearchPill>
        {taskIcons.map((t, i) => <TaskIcon key={i} $dot={t.dot} $active={t.active}>{t.el}</TaskIcon>)}
        <Tray>
          <svg width="13" height="8" fill="none" stroke="#e8e8e8" strokeWidth="1.300"><path d="M1 7l5.500-5.500L12 7" /></svg>
          <Stack $align="center" $w={54}>ENG<br />US</Stack>
          <svg width="18" height="16" viewBox="0 0 18 16" fill="none" stroke="#fff" strokeWidth="1.300"><path d="M1.500 6.500a11 11 0 0 1 15 0M3.700 9a7.700 7.700 0 0 1 10.600 0M6 11.500a4.500 4.500 0 0 1 6 0" /><circle cx="9" cy="13.700" r="1" fill="#fff" /></svg>
          <Spaced><svg width="18" height="16" viewBox="0 0 18 16" fill="none" stroke="#fff" strokeWidth="1.200"><path d="M1 6h2.500L7.500 2.500v11L3.500 10H1z" /><path d="M10 6q1 2 0 4M12.200 4.500q2 3.500 0 7" /><path d="M14.500 3q3 5 0 10" stroke="#6d7880" /></svg></Spaced>
          <Stack $align="right" $w={75}>1:49 PM<br />2023-02-17</Stack>
          <Badge>2</Badge>
        </Tray>
      </TaskbarRow>
    </Desktop>
  );
}
